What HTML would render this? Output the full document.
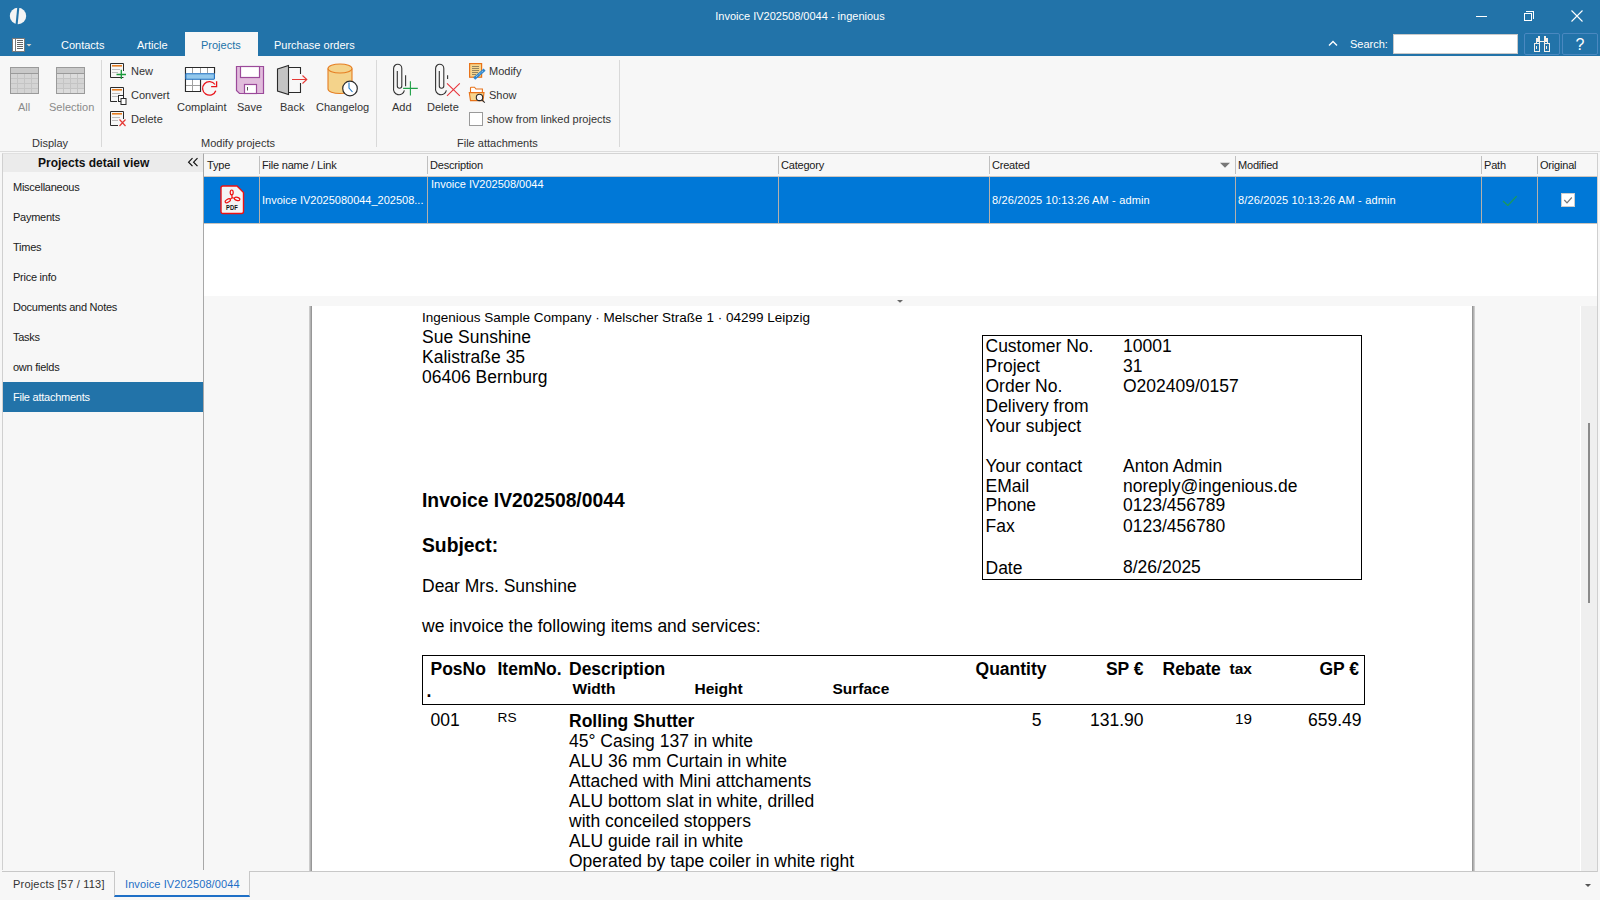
<!DOCTYPE html>
<html><head><meta charset="utf-8">
<style>
*{box-sizing:border-box;margin:0;padding:0}
html,body{width:1600px;height:900px;overflow:hidden;background:#f7f7f7;font-family:"Liberation Sans",sans-serif;font-size:11px;color:#202020}
.a{position:absolute;white-space:nowrap}
#top{position:absolute;left:0;top:0;width:1600px;height:56px;background:#2273a9}
.tab{position:absolute;top:38px;line-height:14px;color:#fff;font-size:11px}
#ribbon{position:absolute;left:0;top:56px;width:1600px;height:96px;background:#f7f7f7;border-bottom:1px solid #d6d6d6}
.rl{position:absolute;font-size:11px;color:#333;white-space:nowrap;line-height:12px}
.sep{position:absolute;top:60px;width:1px;height:87px;background:#d9d9d9}
#left{position:absolute;left:2px;top:153px;width:202px;height:717px;background:#f7f7f7;border-right:1px solid #a8a8a8;border-left:1px solid #d0d0d0;border-top:1px solid #e0e0e0}
.li{position:absolute;left:13px;letter-spacing:-0.25px;font-size:11px;color:#202020;white-space:nowrap;line-height:14px}
#grid{position:absolute;left:204px;top:153px;width:1393px;height:143px;background:#fff}
.gh{position:absolute;top:0;height:22px;background:#f7f7f7;border-bottom:1px solid #c8c8c8}
.ghc{position:absolute;top:4px;font-size:11px;color:#202020;white-space:nowrap}
.gsep{position:absolute;top:3px;width:1px;height:17px;background:#c8c8c8}
#row{position:absolute;left:0;top:23px;width:1393px;height:46px;background:#0078d7;border-bottom:1px solid #c6c6c6}
.rc{position:absolute;color:#fff;font-size:11px;white-space:nowrap}
.rsep{position:absolute;top:0;width:1px;height:46px;background:#a9bfd3}
#doc{position:absolute;left:204px;top:306px;width:1393px;height:565px;background:#f7f7f7;overflow:hidden}
#page{position:absolute;left:107px;top:0;width:1162px;height:600px;background:#fff;border-left:2px solid #888;box-shadow:-1px 0 2px #bbb}
.d{position:absolute;white-space:nowrap;font-family:"Liberation Sans",sans-serif;color:#000;font-size:17.5px;line-height:20px}
.b{font-weight:bold}
#bottom{position:absolute;left:0;top:871px;width:1600px;height:29px;background:#f7f7f7}
</style></head><body>
<div id="top">
 <svg class="a" style="left:9px;top:7px" width="18" height="18" viewBox="0 0 18 18"><circle cx="9" cy="9" r="8.2" fill="#f4f4f4"/><path d="M8.3 0 L10.4 0 L8.6 18 L6.5 18 Z" fill="#2273a9"/></svg>
 <div class="a" style="left:0;width:1600px;top:9px;text-align:center;color:#fff;font-size:11px;line-height:14px">Invoice IV202508/0044 - ingenious</div>
 <div class="a" style="left:1476px;top:16px;width:11px;height:1px;background:#fff"></div>
 <div class="a" style="left:1524px;top:13px;width:8px;height:8px;border:1px solid #fff"></div>
 <div class="a" style="left:1526px;top:11px;width:8px;height:8px;border-top:1px solid #fff;border-right:1px solid #fff"></div>
 <svg class="a" style="left:1571px;top:10px" width="12" height="12" viewBox="0 0 12 12"><path d="M0.5 0.5 L11.5 11.5 M11.5 0.5 L0.5 11.5" stroke="#fff" stroke-width="1.1"/></svg>
 <svg class="a" style="left:12px;top:38px" width="20" height="15" viewBox="0 0 20 15"><rect x="0.5" y="0.5" width="12" height="13" fill="#fff" stroke="#7a7a7a"/><rect x="1" y="1" width="2.5" height="12" fill="#fff"/><path d="M3.5 1 V13" stroke="#7a7a7a"/><path d="M5 2.5 H11 M5 4.5 H11 M5 6.5 H11 M5 8.5 H11 M5 10.5 H11" stroke="#666" stroke-width="1"/><path d="M14.5 6 L19.5 6 L17 8.5 Z" fill="#d8d0c8"/></svg>
 <div class="tab" style="left:61px">Contacts</div>
 <div class="tab" style="left:137px">Article</div>
 <div class="a" style="left:185px;top:32px;width:73px;height:24px;background:#f7f7f7"></div>
 <div class="tab" style="left:201px;color:#2273a9">Projects</div>
 <div class="tab" style="left:274px">Purchase orders</div>
 <svg class="a" style="left:1328px;top:40px" width="10" height="7" viewBox="0 0 10 7"><path d="M1 5.5 L5 1.5 L9 5.5" stroke="#fff" stroke-width="1.4" fill="none"/></svg>
 <div class="tab" style="left:1350px;top:37px">Search:</div>
 <div class="a" style="left:1393px;top:34px;width:125px;height:20px;background:#fff;border:1px solid #c9c9c9"></div>
 <div class="a" style="left:1524px;top:33px;width:36px;height:22px;border:1px solid #4a88c0;border-radius:2px"></div>
 <div class="a" style="left:1562px;top:33px;width:36px;height:22px;border:1px solid #4a88c0;border-radius:2px"></div>
 <svg class="a" style="left:1533px;top:35px" width="19" height="18" viewBox="0 0 19 18"><g fill="none" stroke="#f4f0ea" stroke-width="1"><rect x="1.5" y="8.5" width="5" height="8"/><rect x="11.5" y="8.5" width="5" height="8"/><rect x="3.5" y="3.5" width="3" height="5"/><rect x="11.5" y="3.5" width="3" height="5"/><rect x="5.5" y="1.5" width="1" height="2"/><rect x="11.5" y="1.5" width="1" height="2"/><path d="M7 6.5 H11"/><path d="M3.5 11 V14 M13.5 11 V14"/><rect x="4.5" y="4.5" width="1" height="2"/><rect x="12.5" y="4.5" width="1" height="2"/></g></svg>
 <div class="a" style="left:1562px;top:35px;width:36px;text-align:center;color:#fff;font-size:16px;line-height:20px">?</div>
</div>
<div id="ribbon"></div>
<svg class="a" style="left:0;top:0" width="640" height="152" viewBox="0 0 640 152">
 <!-- Display: All -->
 <g>
  <rect x="10.5" y="67.5" width="28" height="26" fill="#d4d4d4" stroke="#9a9a9a"/>
  <rect x="11" y="68" width="27" height="5" fill="#c9c9c9"/>
  <path d="M11 78.5 H38 M11 83.5 H38 M11 88.5 H38 M17.5 74 V93 M24.5 74 V93 M31.5 74 V93" stroke="#c4c4c4" stroke-width="1"/>
  <path d="M11 73.5 H38" stroke="#9a9a9a" stroke-width="1"/>
 </g>
 <g>
  <rect x="56.5" y="67.5" width="28" height="26" fill="#d4d4d4" stroke="#9a9a9a"/>
  <rect x="57" y="68" width="27" height="5" fill="#c9c9c9"/>
  <rect x="57" y="74" width="27" height="4" fill="#dcdcdc"/><rect x="57" y="89" width="27" height="4" fill="#dcdcdc"/>
  <path d="M57 78.5 H84 M57 83.5 H84 M57 88.5 H84 M63.5 74 V93 M70.5 74 V93 M77.5 74 V93" stroke="#c4c4c4" stroke-width="1"/>
  <path d="M57 73.5 H84" stroke="#9a9a9a" stroke-width="1"/>
 </g>
 <!-- small doc icons -->
 <g id="sdoc">
  <path d="M113 77.5 H110.5 V63.5 H123.5 V71" fill="none" stroke="#2b2b2b" stroke-width="1"/>
  <rect x="112" y="65" width="10" height="1.6" fill="#e67e22"/>
  <path d="M112 69.5 H120 M112 72.5 H118" stroke="#bdbdbd" stroke-width="1.2"/>
 </g>
 <path d="M113 77.5 H123.5" stroke="#2b2b2b" stroke-width="1"/>
 <path d="M116.5 74.5 H126 M121.3 69.8 V79" stroke="#1c9a3c" stroke-width="1.3"/>
 <use href="#sdoc" y="24"/>
 <path d="M113 101.5 H117" stroke="#2b2b2b" stroke-width="1"/>
 <rect x="118.5" y="95.5" width="5" height="6" fill="#fff" stroke="#2b2b2b"/>
 <rect x="121" y="98.5" width="5" height="6" fill="#fff" stroke="#2b2b2b"/>
 <use href="#sdoc" y="48"/>
 <path d="M113 125.5 H118" stroke="#2b2b2b" stroke-width="1"/>
 <path d="M119.5 119.5 L125.5 126 M125.5 119.5 L119.5 126" stroke="#e53935" stroke-width="1.2"/>
 <!-- Complaint -->
 <path d="M185.5 67.5 H214.5 V73.5 M185.5 67.5 V91.5 H200.5 V79" fill="#fff" stroke="#2b2b2b" stroke-width="1.1"/>
 <rect x="186" y="68" width="28" height="5" fill="#fff"/><rect x="186" y="79" width="14" height="12" fill="#fff"/>
 <path d="M192.5 68 V73 M200.5 68 V73 M207.5 68 V73 M192.5 79 V91 M186 85.5 H200" stroke="#a0a0a0" stroke-width="1"/>
 <path d="M185.5 67.5 H214.5 V73.5 M185.5 67.5 V91.5 H200.5 V79" fill="none" stroke="#2b2b2b" stroke-width="1.1"/>
 <rect x="185.8" y="73.8" width="28.6" height="5.4" rx="0.6" fill="#93c8ec" stroke="#1f6fbf" stroke-width="1.1"/>
 <path d="M215.8 90.7 A6.8 6.8 0 1 1 215.0 84.5" fill="none" stroke="#e8141b" stroke-width="1.3"/>
 <path d="M211.1 86.7 H216.6 V81.2" fill="none" stroke="#e8141b" stroke-width="1.3"/>
 <!-- Save -->
 <path d="M236.5 66.5 H263.5 V93.5 H239.5 L236.5 90.5 Z" fill="#e1bcdc" stroke="#9b4a9a" stroke-width="1.2"/>
 <rect x="240.5" y="66.5" width="19" height="11" fill="#fff" stroke="#9b4a9a" stroke-width="1.2"/>
 <rect x="244.5" y="84.5" width="12" height="9" fill="#fff" stroke="#9b4a9a" stroke-width="1.2"/>
 <path d="M247.5 87 V90.5" stroke="#555" stroke-width="1"/>
 <!-- Back -->
 <path d="M277.5 69 L288.5 65.5 V94.5 L277.5 91 Z" fill="#c4c4c4" stroke="#2b2b2b" stroke-width="1.1"/>
 <path d="M289 67.5 H300.5 V74 M300.5 83 V92.5 H289" fill="none" stroke="#2b2b2b" stroke-width="1.1"/>
 <path d="M292 79.5 H307 M302.5 75.5 L306.8 79.5 L302.5 83.5" fill="none" stroke="#e53935" stroke-width="1.1"/>
 <!-- Changelog -->
 <path d="M328 68.5 V89 A12 4.5 0 0 0 352 89 V68.5" fill="#f4d38b" stroke="#e67e22" stroke-width="1.1"/>
 <ellipse cx="340" cy="68.5" rx="12" ry="4.5" fill="#f4d38b" stroke="#e67e22" stroke-width="1.1"/>
 <circle cx="350" cy="88.5" r="7.3" fill="#fff" stroke="#2b2b2b" stroke-width="1.2"/>
 <path d="M349 82.5 V88 L352.5 92" fill="none" stroke="#2379c4" stroke-width="1.1"/>
 <!-- Attach Add -->
 <path d="M397.3 71 V86 A2.25 2.25 0 0 0 401.8 86 V68.4 A4.1 4.1 0 0 0 393.6 68.4 V88 A5.5 5.5 0 0 0 404.4 90.4" fill="none" stroke="#333" stroke-width="1.1"/>
 <path d="M405.6 75.3 V86.2" stroke="#333" stroke-width="1.1"/>
 <path d="M403.1 88.4 H417.8 M410.4 81.3 V95.6" stroke="#1fa046" stroke-width="1.1"/>
 <!-- Attach Delete -->
 <g transform="translate(42 0)">
 <path d="M397.3 71 V86 A2.25 2.25 0 0 0 401.8 86 V68.4 A4.1 4.1 0 0 0 393.6 68.4 V88 A5.5 5.5 0 0 0 404.4 90.4" fill="none" stroke="#333" stroke-width="1.1"/>
 <path d="M405.6 75.3 V79" stroke="#333" stroke-width="1.1"/>
 </g>
 <path d="M447 83.4 L459.8 95.8 M459.8 83.4 L447 95.8" stroke="#e8343b" stroke-width="1.1"/>
 <!-- Modify small -->
 <rect x="469.6" y="63.6" width="12" height="13.6" fill="#f6d68e" stroke="#e8731a" stroke-width="1.2"/>
 <path d="M472 66.5 H479 M472 68.5 H479 M472 70.5 H479 M472 72.5 H478 M472 74.5 H476" stroke="#8a7a5a" stroke-width="0.9"/>
 <path d="M474.2 78.6 L484.6 69.6" stroke="#2b86d0" stroke-width="3"/>
 <path d="M476 76.8 L483.6 70.4" stroke="#fff" stroke-width="0.7" stroke-dasharray="1 1"/>
 <!-- Show small -->
 <path d="M470.5 93 V88 Q470.5 87.2 471.3 87.2 H474.5 L476 89 H482.4 V93" fill="#fff" stroke="#e8731a" stroke-width="1.1"/>
 <path d="M469.3 92.6 H484 L483 100.6 H470.5 Z" fill="#f6d68e" stroke="#e8731a" stroke-width="1.1"/>
 <circle cx="479.5" cy="97.4" r="3.2" fill="#f7f7f7" stroke="#2b2b2b" stroke-width="1.1"/>
 <path d="M481.8 99.8 L484.8 102.6" stroke="#2b2b2b" stroke-width="1.1"/>
 <!-- checkbox -->
 <rect x="469.5" y="112.5" width="13" height="13" fill="#fff" stroke="#9a9a9a"/>
</svg>
<div class="sep" style="left:101px"></div>
<div class="sep" style="left:376px"></div>
<div class="sep" style="left:619px"></div>
<div class="rl" style="left:18px;top:101px;color:#8a8a8a">All</div>
<div class="rl" style="left:49px;top:101px;color:#8a8a8a">Selection</div>
<div class="rl" style="left:32px;top:137px">Display</div>
<div class="rl" style="left:131px;top:65px">New</div>
<div class="rl" style="left:131px;top:89px">Convert</div>
<div class="rl" style="left:131px;top:113px">Delete</div>
<div class="rl" style="left:177px;top:101px">Complaint</div>
<div class="rl" style="left:237px;top:101px">Save</div>
<div class="rl" style="left:280px;top:101px">Back</div>
<div class="rl" style="left:316px;top:101px">Changelog</div>
<div class="rl" style="left:201px;top:137px">Modify projects</div>
<div class="rl" style="left:392px;top:101px">Add</div>
<div class="rl" style="left:427px;top:101px">Delete</div>
<div class="rl" style="left:489px;top:65px">Modify</div>
<div class="rl" style="left:489px;top:89px">Show</div>
<div class="rl" style="left:487px;top:113px">show from linked projects</div>
<div class="rl" style="left:457px;top:137px">File attachments</div>
<div id="left"></div>
<div class="a" style="left:0;top:151px;width:1600px;height:1px;background:#dcdcdc"></div>
<div class="a" style="left:3px;top:154px;width:200px;height:18px;background:#ebebeb"></div>
<div class="a" style="left:38px;top:156px;font-size:12px;font-weight:bold;line-height:14px;color:#111">Projects detail view</div>
<svg class="a" style="left:187px;top:157px" width="12" height="10" viewBox="0 0 12 10"><path d="M5.5 1.2 L1.6 5.2 L5.5 9.2 M10.5 1.2 L6.6 5.2 L10.5 9.2" fill="none" stroke="#111" stroke-width="1.2"/></svg>
<div class="li" style="top:180px">Miscellaneous</div>
<div class="li" style="top:210px">Payments</div>
<div class="li" style="top:240px">Times</div>
<div class="li" style="top:270px">Price info</div>
<div class="li" style="top:300px">Documents and Notes</div>
<div class="li" style="top:330px">Tasks</div>
<div class="li" style="top:360px">own fields</div>
<div class="a" style="left:3px;top:382px;width:200px;height:30px;background:#2273a9"></div>
<div class="li" style="top:390px;color:#fff">File attachments</div>
<div id="grid">
<div class="a" style="left:0;top:0;width:1393px;height:24px;background:#f7f7f7;border-bottom:1px solid #cdc6c0;border-top:1px solid #d4d4d4"></div>
<div class="ghc" style="left:3px;top:6px;line-height:13px;letter-spacing:-0.2px">Type</div>
<div class="a" style="left:55px;top:3px;width:1px;height:18px;background:#c0c0c0"></div>
<div class="ghc" style="left:58px;top:6px;line-height:13px;letter-spacing:-0.2px">File name / Link</div>
<div class="a" style="left:223px;top:3px;width:1px;height:18px;background:#c0c0c0"></div>
<div class="ghc" style="left:226px;top:6px;line-height:13px;letter-spacing:-0.2px">Description</div>
<div class="a" style="left:574px;top:3px;width:1px;height:18px;background:#c0c0c0"></div>
<div class="ghc" style="left:577px;top:6px;line-height:13px;letter-spacing:-0.2px">Category</div>
<div class="a" style="left:785px;top:3px;width:1px;height:18px;background:#c0c0c0"></div>
<div class="ghc" style="left:788px;top:6px;line-height:13px;letter-spacing:-0.2px">Created</div>
<div class="a" style="left:1031px;top:3px;width:1px;height:18px;background:#c0c0c0"></div>
<div class="ghc" style="left:1034px;top:6px;line-height:13px;letter-spacing:-0.2px">Modified</div>
<div class="a" style="left:1277px;top:3px;width:1px;height:18px;background:#c0c0c0"></div>
<div class="ghc" style="left:1280px;top:6px;line-height:13px;letter-spacing:-0.2px">Path</div>
<div class="a" style="left:1333px;top:3px;width:1px;height:18px;background:#c0c0c0"></div>
<div class="ghc" style="left:1336px;top:6px;line-height:13px;letter-spacing:-0.2px">Original</div>
<svg class="a" style="left:1015px;top:9px" width="12" height="7" viewBox="0 0 12 7"><path d="M1 0.8 H11 L6 5.8 Z" fill="#777"/></svg>
<div class="a" style="left:0;top:24px;width:1393px;height:46px;background:#0078d7"></div>
<div class="a" style="left:0;top:70px;width:1393px;height:1px;background:#c9c3bd"></div>
<div class="a" style="left:55px;top:24px;width:1px;height:46px;background:#b4b0ab"></div>
<div class="a" style="left:223px;top:24px;width:1px;height:46px;background:#b4b0ab"></div>
<div class="a" style="left:574px;top:24px;width:1px;height:46px;background:#b4b0ab"></div>
<div class="a" style="left:785px;top:24px;width:1px;height:46px;background:#b4b0ab"></div>
<div class="a" style="left:1031px;top:24px;width:1px;height:46px;background:#b4b0ab"></div>
<div class="a" style="left:1277px;top:24px;width:1px;height:46px;background:#b4b0ab"></div>
<div class="a" style="left:1333px;top:24px;width:1px;height:46px;background:#b4b0ab"></div>
<svg class="a" style="left:16px;top:32px" width="25" height="30" viewBox="0 0 25 30"><path d="M1 3 Q1 1 3 1 H17 L23.5 7.5 V26.5 Q23.5 28.5 21.5 28.5 H3 Q1 28.5 1 26.5 Z" fill="#f4f4f4" stroke="#ee1111" stroke-width="1.4"/>
<g fill="none" stroke="#ee1111" stroke-width="1.2"><ellipse cx="11.7" cy="7.4" rx="1.5" ry="2.4"/><ellipse cx="17.1" cy="13.9" rx="2.8" ry="1.6" transform="rotate(15 17.1 13.9)"/><ellipse cx="7.8" cy="15.8" rx="2.9" ry="1.5" transform="rotate(-30 7.8 15.8)"/><path d="M11.8 9.8 L12.1 12.6 M14.4 13.3 L12.1 12.6 L10.2 14.4"/></g>
<text x="12" y="25.2" text-anchor="middle" font-family="Liberation Sans" font-size="6.5" font-weight="bold" fill="#111" transform="scale(0.9 1) translate(1.3 0)">PDF</text></svg>
<div class="rc" style="left:58px;top:40px;line-height:14px">Invoice IV2025080044_202508...</div>
<div class="rc" style="left:227px;top:24px;line-height:14px">Invoice IV202508/0044</div>
<div class="rc" style="left:788px;top:40px;line-height:14px;letter-spacing:0.15px">8/26/2025 10:13:26 AM - admin</div>
<div class="rc" style="left:1034px;top:40px;line-height:14px;letter-spacing:0.15px">8/26/2025 10:13:26 AM - admin</div>
<svg class="a" style="left:1297px;top:41px" width="16" height="12" viewBox="0 0 16 12"><path d="M2 7 L6.8 11.5 L15.7 2.2" fill="none" stroke="#1a9a5a" stroke-width="1.3"/></svg>
<div class="a" style="left:1357px;top:40px;width:14px;height:14px;background:#fff;border:1px solid #ccc"></div>
<svg class="a" style="left:1357px;top:40px" width="14" height="14" viewBox="0 0 14 14"><path d="M3.3 7 L6 9.8 L10.8 4.5" fill="none" stroke="#777" stroke-width="1.2"/></svg>
<div class="a" style="left:1393px;top:0;width:1px;height:143px;background:#d0d0d0"></div>
</div>
<div id="doc"><div style="position:absolute;left:-204px;top:-306px;width:1600px;height:900px">
<div class="a" style="left:309px;top:306px;width:3px;height:600px;background:linear-gradient(to right,#d8d8d8,#8a8a8a)"></div>
<div class="a" style="left:312px;top:306px;width:1160px;height:600px;background:#fff"></div>
<div class="a" style="left:1472px;top:306px;width:3px;height:600px;background:linear-gradient(to right,#8a8a8a,#d8d8d8)"></div>
<div class="a" style="left:1580px;top:306px;width:1px;height:565px;background:#fff"></div><div class="a" style="left:1581px;top:306px;width:16px;height:565px;background:#efefef"></div>
<div class="a" style="left:1588px;top:423px;width:2px;height:180px;background:#8a8a8a"></div>
<div class="d" style="left:422px;top:311.0px;font-size:13.5px;line-height:13.5px;">Ingenious Sample Company · Melscher Straße 1 · 04299 Leipzig</div>
<div class="d" style="left:422px;top:329.19px;font-size:17.5px;line-height:17.5px;">Sue Sunshine</div>
<div class="d" style="left:422px;top:349.19px;font-size:17.5px;line-height:17.5px;">Kalistraße 35</div>
<div class="d" style="left:422px;top:369.19px;font-size:17.5px;line-height:17.5px;">06406 Bernburg</div>
<div class="d" style="left:422px;top:490.66px;font-size:19.3px;line-height:19.3px;font-weight:bold;">Invoice IV202508/0044</div>
<div class="d" style="left:422px;top:535.66px;font-size:19.3px;line-height:19.3px;font-weight:bold;">Subject:</div>
<div class="d" style="left:422px;top:578.19px;font-size:17.5px;line-height:17.5px;">Dear Mrs. Sunshine</div>
<div class="d" style="left:422px;top:618.19px;font-size:17.5px;line-height:17.5px;">we invoice the following items and services:</div>
<div class="a" style="left:982px;top:335px;width:380px;height:245px;border:1px solid #000"></div>
<div class="d" style="left:985.5px;top:337.69px;font-size:17.5px;line-height:17.5px;">Customer No.</div>
<div class="d" style="left:1123px;top:337.69px;font-size:17.5px;line-height:17.5px;">10001</div>
<div class="d" style="left:985.5px;top:357.69px;font-size:17.5px;line-height:17.5px;">Project</div>
<div class="d" style="left:1123px;top:357.69px;font-size:17.5px;line-height:17.5px;">31</div>
<div class="d" style="left:985.5px;top:377.69px;font-size:17.5px;line-height:17.5px;">Order No.</div>
<div class="d" style="left:1123px;top:377.69px;font-size:17.5px;line-height:17.5px;">O202409/0157</div>
<div class="d" style="left:985.5px;top:397.69px;font-size:17.5px;line-height:17.5px;">Delivery from</div>
<div class="d" style="left:985.5px;top:417.69px;font-size:17.5px;line-height:17.5px;">Your subject</div>
<div class="d" style="left:985.5px;top:457.69px;font-size:17.5px;line-height:17.5px;">Your contact</div>
<div class="d" style="left:1123px;top:457.69px;font-size:17.5px;line-height:17.5px;">Anton Admin</div>
<div class="d" style="left:985.5px;top:477.69px;font-size:17.5px;line-height:17.5px;">EMail</div>
<div class="d" style="left:1123px;top:477.69px;font-size:17.5px;line-height:17.5px;">noreply@ingenious.de</div>
<div class="d" style="left:985.5px;top:497.49px;font-size:17.5px;line-height:17.5px;">Phone</div>
<div class="d" style="left:1123px;top:497.49px;font-size:17.5px;line-height:17.5px;">0123/456789</div>
<div class="d" style="left:985.5px;top:517.69px;font-size:17.5px;line-height:17.5px;">Fax</div>
<div class="d" style="left:1123px;top:517.69px;font-size:17.5px;line-height:17.5px;">0123/456780</div>
<div class="d" style="left:985.5px;top:560.49px;font-size:17.5px;line-height:17.5px;">Date</div>
<div class="d" style="left:1123px;top:558.69px;font-size:17.5px;line-height:17.5px;">8/26/2025</div>
<div class="a" style="left:422px;top:655px;width:943px;height:50px;border:1px solid #000"></div>
<div class="d" style="left:430.5px;top:661.49px;font-size:17.5px;line-height:17.5px;font-weight:bold;">PosNo</div>
<div class="d" style="left:426.5px;top:682.69px;font-size:17.5px;line-height:17.5px;font-weight:bold;">.</div>
<div class="d" style="left:497.5px;top:661.49px;font-size:17.5px;line-height:17.5px;font-weight:bold;">ItemNo.</div>
<div class="d" style="left:569px;top:661.49px;font-size:17.5px;line-height:17.5px;font-weight:bold;">Description</div>
<div class="d" style="left:572.5px;top:681.08px;font-size:15.5px;line-height:15.5px;font-weight:bold;">Width</div>
<div class="d" style="left:694.5px;top:681.08px;font-size:15.5px;line-height:15.5px;font-weight:bold;">Height</div>
<div class="d" style="left:832.5px;top:681.08px;font-size:15.5px;line-height:15.5px;font-weight:bold;">Surface</div>
<div class="d" style="right:553.5px;top:661.49px;font-size:17.5px;line-height:17.5px;font-weight:bold;">Quantity</div>
<div class="d" style="right:456.5px;top:661.49px;font-size:17.5px;line-height:17.5px;font-weight:bold;">SP €</div>
<div class="d" style="left:1162.5px;top:661.49px;font-size:17.5px;line-height:17.5px;font-weight:bold;">Rebate</div>
<div class="d" style="left:1229.5px;top:660.7px;font-size:15.5px;line-height:15.5px;font-weight:bold;">tax</div>
<div class="d" style="right:241px;top:661.49px;font-size:17.5px;line-height:17.5px;font-weight:bold;">GP €</div>
<div class="d" style="left:430.5px;top:712.19px;font-size:17.5px;line-height:17.5px;">001</div>
<div class="d" style="left:497.5px;top:711.20px;font-size:13.7px;line-height:13.7px;">RS</div>
<div class="d" style="left:569px;top:713.49px;font-size:17.5px;line-height:17.5px;font-weight:bold;">Rolling Shutter</div>
<div class="d" style="left:569px;top:733.39px;font-size:17.5px;line-height:17.5px;">45° Casing 137 in white</div>
<div class="d" style="left:569px;top:753.39px;font-size:17.5px;line-height:17.5px;">ALU 36 mm Curtain in white</div>
<div class="d" style="left:569px;top:773.39px;font-size:17.5px;line-height:17.5px;">Attached with Mini attchaments</div>
<div class="d" style="left:569px;top:793.39px;font-size:17.5px;line-height:17.5px;">ALU bottom slat in white, drilled</div>
<div class="d" style="left:569px;top:813.39px;font-size:17.5px;line-height:17.5px;">with conceiled stoppers</div>
<div class="d" style="left:569px;top:833.39px;font-size:17.5px;line-height:17.5px;">ALU guide rail in white</div>
<div class="d" style="left:569px;top:853.39px;font-size:17.5px;line-height:17.5px;">Operated by tape coiler in white right</div>
<div class="d" style="right:558.5px;top:712.19px;font-size:17.5px;line-height:17.5px;">5</div>
<div class="d" style="right:456.5px;top:712.19px;font-size:17.5px;line-height:17.5px;">131.90</div>
<div class="d" style="right:348px;top:710.6px;font-size:15.2px;line-height:15.2px;">19</div>
<div class="d" style="right:238.5px;top:712.19px;font-size:17.5px;line-height:17.5px;">659.49</div>
</div></div>
<div class="a" style="left:204px;top:296px;width:1393px;height:10px;background:#f7f7f7"></div>
<svg class="a" style="left:896px;top:299px" width="8" height="5" viewBox="0 0 8 5"><path d="M1 1 H7 L4 3.8 Z" fill="#6a6a6a"/></svg>
<div id="bottom"></div>
<div class="a" style="left:2px;top:871px;width:1596px;height:1px;background:#c8c8c8"></div>
<div class="a" style="left:13px;top:877px;font-size:11px;line-height:14px;color:#333;letter-spacing:0.2px">Projects [57 / 113]</div>
<div class="a" style="left:114px;top:871px;width:136px;height:26px;border-left:1px solid #c8c8c8;border-right:1px solid #c8c8c8;background:#f7f7f7;border-bottom:2px solid #1e6fc6"></div>
<div class="a" style="left:125px;top:877px;font-size:11px;line-height:14px;color:#1e6fc6;letter-spacing:0.1px">Invoice IV202508/0044</div>
<svg class="a" style="left:1584px;top:883px" width="8" height="5" viewBox="0 0 8 5"><path d="M1 1 H7 L4 4 Z" fill="#555"/></svg>
<div class="a" style="left:1597px;top:153px;width:1px;height:719px;background:#cfcfcf"></div>
</body></html>
